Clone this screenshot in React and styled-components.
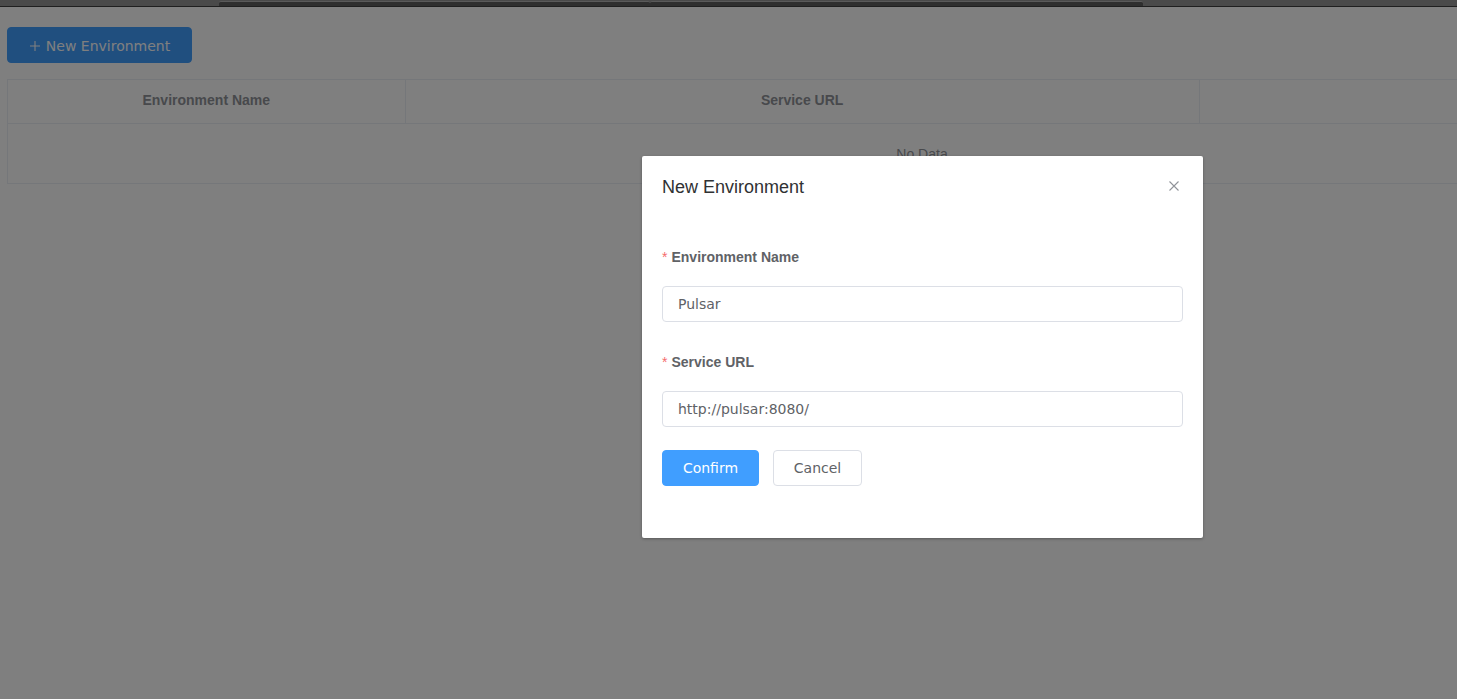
import React from "react";
import styled, { createGlobalStyle } from "styled-components";

const GlobalStyle = createGlobalStyle`
  html, body {
    margin: 0;
    padding: 0;
    overflow: hidden;
    background: #fff;
  }
  body {
    font-family: "Liberation Sans", Helvetica, Arial, sans-serif;
    color: #606266;
  }
`;

const columns = [
  { title: "Environment Name", width: 398 },
  { title: "Service URL", width: 795 },
  { title: "", width: 637 },
];

const App = () => {
  return (
    <Viewport>
      <GlobalStyle />
      <ChromeStrip>
        <ChromeTab $left={219} $width={431} />
        <ChromeTab $left={650} $width={493} />
      </ChromeStrip>
      <Page>
        <PrimaryButton $wide>
          <PlusIcon viewBox="0 0 12 12">
            <path d="M6 1v10M1 6h10" stroke="currentColor" strokeWidth="1.1" />
          </PlusIcon>
          New Environment
        </PrimaryButton>
        <Table>
          <HeaderRow>
            {columns.map((col, i) => (
              <HeaderCell key={i} style={{ width: col.width }}>
                {col.title}
              </HeaderCell>
            ))}
          </HeaderRow>
          <EmptyRow>No Data</EmptyRow>
        </Table>
        <Overlay>
          <Dialog>
            <DialogHeader>
              <DialogTitle>New Environment</DialogTitle>
              <CloseButton>
                <svg viewBox="0 0 12 12" width="12" height="12">
                  <path
                    d="M1.5 1.5l9 9M10.5 1.5l-9 9"
                    stroke="#909399"
                    strokeWidth="1.1"
                  />
                </svg>
              </CloseButton>
            </DialogHeader>
            <DialogBody>
              <FormItem>
                <Label>Environment Name</Label>
                <Input defaultValue="Pulsar" />
              </FormItem>
              <FormItem>
                <Label>Service URL</Label>
                <Input defaultValue="http://pulsar:8080/" />
              </FormItem>
              <Actions>
                <PrimaryButton>Confirm</PrimaryButton>
                <DefaultButton>Cancel</DefaultButton>
              </Actions>
            </DialogBody>
          </Dialog>
        </Overlay>
      </Page>
    </Viewport>
  );
};

export default App;

const Viewport = styled.div`
  width: 100vw;
  height: 100vh;
  overflow: hidden;
`;

const ChromeStrip = styled.div`
  position: relative;
  height: 6px;
  background: #4a4a4a;
  border-bottom: 1px solid #1f1f1f;
`;

const ChromeTab = styled.div`
  position: absolute;
  top: 1px;
  bottom: 0;
  left: ${({ $left }) => $left}px;
  width: ${({ $width }) => $width}px;
  background: #2f2f2f;
  border-top: 1px solid #5a5a5a;
  border-radius: 2px 2px 0 0;
  box-sizing: border-box;
`;

const Page = styled.div`
  position: relative;
  width: 1844px;
  padding: 20px 7px;
  box-sizing: border-box;
  height: 692px;
`;

const PlusIcon = styled.svg`
  width: 12px;
  height: 12px;
  margin-right: 5px;
`;

const PrimaryButton = styled.button`
  display: inline-flex;
  align-items: center;
  justify-content: center;
  height: 36px;
  padding: ${({ $wide }) => ($wide ? "1px 20px 0" : "0 20px")};
  border: 1px solid #409eff;
  border-radius: 4px;
  background: #409eff;
  color: #fff;
  font-family: "DejaVu Sans", sans-serif;
  font-size: 14px;
  box-sizing: border-box;
  width: ${({ $wide }) => ($wide ? "185px" : "97px")};
`;

const DefaultButton = styled.button`
  height: 36px;
  width: 89px;
  padding: 0;
  border: 1px solid #dcdfe6;
  border-radius: 4px;
  background: #fff;
  color: #606266;
  font-family: "DejaVu Sans", sans-serif;
  font-size: 14px;
  box-sizing: border-box;
`;

const Table = styled.div`
  margin-top: 16px;
  width: 1830px;
  border: 1px solid #ebeef5;
  box-sizing: border-box;
`;

const HeaderRow = styled.div`
  display: flex;
  border-bottom: 1px solid #ebeef5;
`;

const HeaderCell = styled.div`
  height: 43px;
  display: flex;
  align-items: center;
  justify-content: center;
  padding-bottom: 4px;
  font-size: 14px;
  font-weight: bold;
  color: #909399;
  border-right: 1px solid #ebeef5;
  box-sizing: border-box;

  &:last-child {
    border-right: none;
  }
`;

const EmptyRow = styled.div`
  height: 59px;
  line-height: 60px;
  text-align: center;
  font-size: 14px;
  color: #909399;
`;

const Overlay = styled.div`
  position: absolute;
  top: 0;
  left: 0;
  width: 1844px;
  height: 692px;
  background: rgba(0, 0, 0, 0.5);
  padding-top: 149px;
  box-sizing: border-box;
`;

const Dialog = styled.div`
  width: 561px;
  margin: 0 0 0 642px;
  background: #fff;
  border-radius: 2px;
  box-shadow: 0 1px 3px rgba(0, 0, 0, 0.3);
`;

const DialogHeader = styled.div`
  display: flex;
  align-items: center;
  justify-content: space-between;
  padding: 19px 20px 11px;
`;

const DialogTitle = styled.span`
  font-size: 18px;
  line-height: 24px;
  color: #303133;
`;

const CloseButton = styled.span`
  display: flex;
  margin-right: 3px;
  margin-top: -2px;
`;

const DialogBody = styled.div`
  padding: 30px 20px 30px;
`;

const FormItem = styled.div`
  margin-bottom: 23px;
`;

const Label = styled.div`
  line-height: 34px;
  margin-bottom: 12px;
  font-size: 14px;
  font-weight: bold;
  color: #606266;

  &::before {
    content: "*";
    color: #f56c6c;
    margin-right: 4px;
    font-weight: normal;
  }
`;

const Input = styled.input`
  display: block;
  width: 100%;
  height: 36px;
  padding: 0 15px;
  border: 1px solid #dcdfe6;
  border-radius: 4px;
  box-sizing: border-box;
  font-family: "DejaVu Sans", sans-serif;
  font-size: 14px;
  color: #606266;
  outline: none;
`;

const Actions = styled.div`
  display: flex;
  gap: 14px;
  margin-top: 23px;
  margin-bottom: 22px;
`;
